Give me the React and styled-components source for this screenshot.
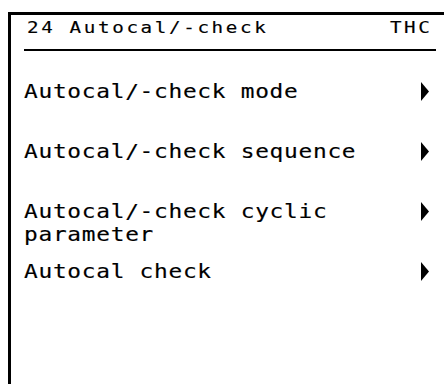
import React from 'react';
import styled, { createGlobalStyle } from 'styled-components';

const GlobalStyle = createGlobalStyle`
  html, body {
    margin: 0;
    padding: 0;
    background: #fff;
    overflow: hidden;
  }
  body {
    font-family: 'DejaVu Sans Mono', 'Liberation Mono', monospace;
    color: #000;
    -webkit-text-stroke: 0.15px #000;
  }
`;

const Screen = styled.div`
  width: 444px;
  height: 384px;
  padding: 12px 0 0 8px;
  box-sizing: border-box;
  overflow: hidden;
`;

const Frame = styled.div`
  width: 460px;
  height: 400px;
  box-sizing: border-box;
  border: 3px solid #000;
  border-right: none;
  padding: 0 0 0 13px;
`;

const Inner = styled.div`
  width: 412px;
`;

const Header = styled.div`
  display: flex;
  justify-content: space-between;
  align-items: baseline;
  padding: 3px 4px 11px 3px;
  border-bottom: 2px solid #000;
  font-size: 16px;
  line-height: 20px;
  letter-spacing: 2.2px;
`;

// the display font is wider than any installed mono face, so stretch it
const WideText = styled.span`
  display: inline-block;
  transform: scaleX(1.2);
  transform-origin: ${(p) => (p.$right ? 'right' : 'left')} center;
`;

const Menu = styled.ul`
  list-style: none;
  margin: 29px 0 0 0;
  padding: 0;
`;

const Row = styled.li`
  display: flex;
  justify-content: space-between;
  align-items: flex-start;
  height: 60px;
  font-size: 19px;
  line-height: 23px;
  letter-spacing: 0.6px;
`;

const Label = styled(WideText)`
  max-width: 300px;
`;

const Arrow = styled.svg`
  flex: none;
  width: 8px;
  height: 19px;
  margin: 2px 7px 0 0;
`;

const items = [
  'Autocal/-check mode',
  'Autocal/-check sequence',
  'Autocal/-check cyclic parameter',
  'Autocal check',
];

const App = () => (
  <>
    <GlobalStyle />
    <Screen>
      <Frame>
        <Inner>
          <Header>
            <WideText>24 Autocal/-check</WideText>
            <WideText $right>THC</WideText>
          </Header>
          <Menu>
            {items.map((item) => (
              <Row key={item}>
                <Label>{item}</Label>
                <Arrow viewBox="0 0 8 19">
                  <path d="M0 0 L8 9.5 L0 19 Z" fill="#000" />
                </Arrow>
              </Row>
            ))}
          </Menu>
        </Inner>
      </Frame>
    </Screen>
  </>
);

export default App;
